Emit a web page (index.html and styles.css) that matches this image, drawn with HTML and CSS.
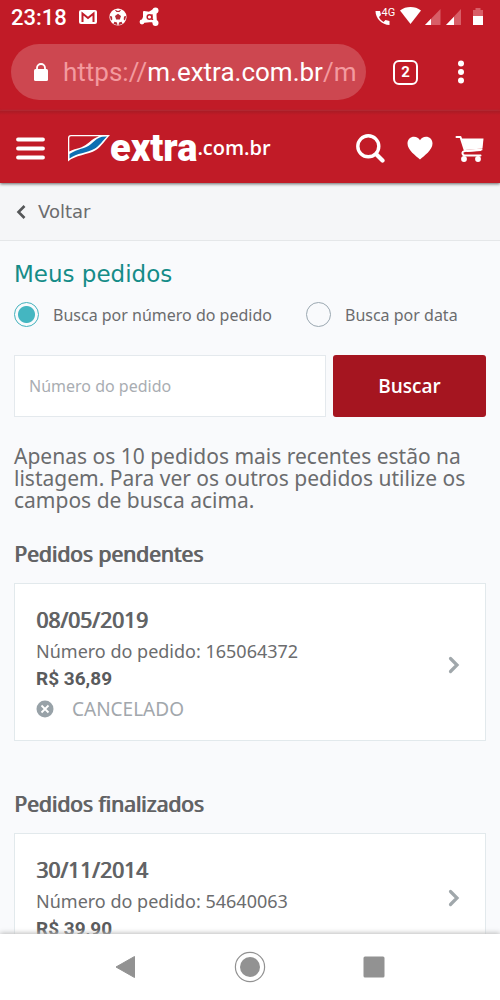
FILE: index.html
```html
<!DOCTYPE html>
<html lang="pt-BR">
<head>
<meta charset="utf-8">
<meta name="viewport" content="width=device-width, initial-scale=1">
<title>Meus pedidos</title>
<link rel="stylesheet" href="styles.css">
</head>
<body>
<div class="screen">
  <div class="browser">
    <div class="status">
      <span class="clock">23:18</span>
      <svg width="18" height="14" viewBox="0 0 18 14"><rect width="18" height="14" rx="2" fill="#fff"/><path d="M3.500 12V3.500L9 8l5.500-4.500V12" fill="none" stroke="#c11b27" stroke-width="2"/></svg>
      <svg width="18" height="18" viewBox="0 0 18 18"><circle cx="9" cy="9" r="8.600" fill="#fff"/><g fill="#b52a35"><path d="M9 5.800l3 2.200-1.200 3.400H7.200L6 8z"/><path d="M5.500 1.600L9 3l3.500-1.400L10.500 4h-3zM.8 8l2.200.6.300 2.800-1.300 1zM17.200 8l-2.200.6-.3 2.800 1.300 1zM4.500 16l.9-2.300 2.600.9.400 2.400zM13.500 16l-.9-2.300-2.600.9-.4 2.400z"/></g></svg>
      <svg width="20" height="20" viewBox="0 0 20 20"><path d="M5 5l5 .8L14.500 3 17 3l-.5 5 .3 5 .2 4-4-3-5 .5L3 15l2-5z" fill="#fff" stroke="#fff" stroke-width="2" stroke-linejoin="round"/><circle cx="16.500" cy="3.500" r="3" fill="#fff"/><circle cx="16.500" cy="16" r="3" fill="#fff"/><circle cx="3" cy="15" r="2.400" fill="#fff"/><circle cx="10.500" cy="10" r="2.300" fill="none" stroke="#c11b27" stroke-width="1.500"/><path d="M13 7.300v5h1.200" fill="none" stroke="#c11b27" stroke-width="1.300"/></svg>
      <svg class="signals" width="109" height="20" viewBox="0 0 109 20"><path d="M.5 4c0 7.500 6.500 13.800 14 14v-4l-4-1-2 2C6 13.500 5 12 4 10l2-2-1-4z" fill="#fff"/><text x="6.500" y="9" class="net">4G</text><path d="M25 3.500c6-4.600 15-4.600 21 0L35.500 17z" fill="#fff"/><path d="M50 18L65.500 2v16z" fill="#d85e67"/><path d="M50 18l6-6.200V18z" fill="#fff"/><path d="M71 18L86 2v16z" fill="#d85e67"/><path d="M71 18l8-8.300V18z" fill="#fff"/><path d="M98 3h2.500V1h5v2h2.500v7H98z" fill="#d85e67"/><path d="M98 9h10v9H98z" fill="#fff"/></svg>
    </div>
    <div class="toolbar">
      <div class="address">
        <svg width="14" height="19" viewBox="0 0 14 19"><rect y="6" width="14" height="12" rx="1.500" fill="#fff"/><path d="M3 7V5a4 4 0 0 1 8 0v2" fill="none" stroke="#fff" stroke-width="1.800"/></svg>
        <span class="url">https://<b>m.extra.com.br</b>/m</span>
      </div>
      <button class="tabs" aria-label="Abas abertas">2</button>
      <button class="plain" aria-label="Menu do navegador"><svg width="8" height="24" viewBox="0 0 8 24" fill="#fff"><circle cx="4" cy="3.500" r="3"/><circle cx="4" cy="12" r="3"/><circle cx="4" cy="20.500" r="3"/></svg></button>
    </div>
  </div>

  <header class="site">
    <button class="plain" aria-label="Menu"><svg width="29" height="23" viewBox="0 0 29 23"><path d="M2 2.500h25M2 11.500h25M2 20.500h25" stroke="#fff" stroke-width="3.800" stroke-linecap="round"/></svg></button>
    <a class="logo" href="#" aria-label="extra.com.br">
      <svg width="43" height="28" viewBox="0 0 43 28"><path d="M1 27.500V4Q1 1 4 1H43C38 6 35 12 29 16 21 21 8 21 1 27.500z" fill="#fff"/><path d="M2.300 17.500V4Q2.300 2.300 4 2.300H32C24 5 21 11 14 13.500 9 15 6 15.500 2.300 17.500z" fill="#c11b27"/><path d="M2.500 20C11 14.500 18 15 24 10 28 6.500 31 3.500 35 2.800L40 2.500C36 6 33 11.500 28 14.500 20 19 10 19 2.500 24.500z" fill="#0d6fb2"/></svg>
      <span class="brand">extra</span><span class="domain">.com.br</span>
    </a>
    <button class="plain" aria-label="Pesquisar"><svg width="29" height="29" viewBox="0 0 29 29" fill="none" stroke="#fff" stroke-linecap="round"><circle cx="12.300" cy="12.300" r="10.500" stroke-width="3.400"/><path d="M20.500 20.500l6 6" stroke-width="4.200"/></svg></button>
    <button class="plain" aria-label="Favoritos"><svg width="26" height="24" viewBox="0 0 26 24"><path d="M13 23.500C9 20 .5 14 .5 7.500.5 3.500 3.500.8 7 .8c2.700 0 4.800 1.200 6 3.400C14.200 2 16.300.8 19 .8c3.500 0 6.500 2.700 6.500 6.700C25.500 14 17 20 13 23.500z" fill="#fff"/></svg></button>
    <button class="plain" aria-label="Carrinho"><svg width="29" height="27" viewBox="0 0 29 27"><path d="M6.500 3.500H28.500L27.500 13.500 10 15z" fill="#fff"/><path d="M1.500 2H5.500L9.500 14.500M26.500 14.500L10 16Q7 16.500 7.500 18.500 8 20.500 10 20.500H25.500" fill="none" stroke="#fff" stroke-width="2" stroke-linecap="round" stroke-linejoin="round"/><path d="M11 15L26 14.200V16L12 17z" fill="#fff"/><circle cx="9" cy="24" r="2.900" fill="#fff"/><circle cx="23" cy="24" r="2.900" fill="#fff"/></svg></button>
  </header>

  <nav class="crumb">
    <a href="#"><svg width="10" height="16" viewBox="0 0 10 16"><path d="M8.500 2L2.500 8l6 6" fill="none" stroke="#555759" stroke-width="2.600"/></svg>Voltar</a>
  </nav>

  <main class="content">
    <h1>Meus pedidos</h1>
    <form class="search">
      <div class="options">
        <label><input type="radio" name="busca" checked>Busca por número do pedido</label>
        <label><input type="radio" name="busca">Busca por data</label>
      </div>
      <div class="fields">
        <input class="number" type="text" placeholder="Número do pedido" aria-label="Número do pedido">
        <button class="submit" type="button">Buscar</button>
      </div>
    </form>
    <p class="note">Apenas os 10 pedidos mais recentes estão na listagem. Para ver os outros pedidos utilize os campos de busca acima.</p>

    <section>
      <h2>Pedidos pendentes</h2>
      <a class="order" href="#">
        <div>
          <h3>08/05/2019</h3>
          <p class="code">Número do pedido: 165064372</p>
          <p class="price">R$ 36,89</p>
          <p class="state"><svg width="18" height="18" viewBox="0 0 18 18"><circle cx="9" cy="9" r="8.500" fill="#98a2a8"/><path d="M5.500 5.500l7 7M12.500 5.500l-7 7" stroke="#fff" stroke-width="1.800"/></svg>CANCELADO</p>
        </div>
        <svg width="12" height="18" viewBox="0 0 12 18"><path d="M2.500 2.500L9 9l-6.500 6.500" fill="none" stroke="#a0a7ab" stroke-width="3.200" stroke-linecap="round"/></svg>
      </a>
    </section>
    <section>
      <h2>Pedidos finalizados</h2>
      <a class="order" href="#">
        <div>
          <h3>30/11/2014</h3>
          <p class="code">Número do pedido: 54640063</p>
          <p class="price">R$ 39,90</p>
        </div>
        <svg width="12" height="18" viewBox="0 0 12 18"><path d="M2.500 2.500L9 9l-6.500 6.500" fill="none" stroke="#a0a7ab" stroke-width="3.200" stroke-linecap="round"/></svg>
      </a>
    </section>
  </main>

  <div class="system">
    <button class="plain" aria-label="Voltar"><svg width="32" height="32" viewBox="0 0 32 32"><path d="M6 16L24.500 5.500v21z" fill="#929292" stroke="#929292" stroke-linejoin="round"/></svg></button>
    <button class="plain" aria-label="Início"><svg width="32" height="32" viewBox="0 0 32 32"><circle cx="16" cy="16" r="14.600" fill="none" stroke="#929292" stroke-width="1.200"/><circle cx="16" cy="16" r="10" fill="#929292"/></svg></button>
    <button class="plain" aria-label="Recentes"><svg width="32" height="32" viewBox="0 0 32 32"><rect x="5.500" y="5.500" width="21" height="21" rx="1.500" fill="#929292"/></svg></button>
  </div>
</div>
</body>
</html>
```
FILE: styles.css
```css
* { box-sizing: border-box; }
body { margin: 0; font-family: "Noto Sans", sans-serif; color: #6b6c6e; background: #f9fafc; }
h1, h2, h3, p { margin: 0; }
a { color: inherit; text-decoration: none; }
svg { display: block; flex: none; }
.screen { display: flex; flex-direction: column; height: 100vh; overflow: hidden; }
.browser, .site, .crumb, .system { flex: none; }
.plain { display: block; padding: 0; border: 0; background: none; }

.browser { background: #c11b27; color: #fff; font-family: Roboto, sans-serif; padding-bottom: 11px; }
.status { display: flex; align-items: center; gap: 12px; height: 34px; padding: 0 16px 0 11px; }
.clock { font-size: 22px; font-weight: 500; }
.signals { margin-left: auto; }
.net { font: 11px Roboto, sans-serif; fill: #fff; }
.toolbar { display: flex; align-items: center; padding: 10px 35px 0 11px; }
.address { flex: 1; display: flex; align-items: center; gap: 15px; min-width: 0; height: 56px; margin-right: 27px; padding: 0 12px 0 23px; border-radius: 28px; background: #cd4750; }
.url { font-size: 26px; color: #f39a9f; white-space: nowrap; }
.url b { font-weight: 400; color: #fff; }
.tabs { width: 25px; height: 25px; margin-right: 39px; padding: 0; border: 2px solid #fff; border-radius: 6px; background: none; color: #fff; font: 700 15px Roboto, sans-serif; }

.site { position: relative; display: flex; align-items: center; gap: 22px; height: 72px; padding: 2px 16px 0; background: linear-gradient(#aa1b25, #c11b27 4px); box-shadow: 0 1px 3px #666; }
.logo { flex: 1; display: flex; align-items: center; color: #fff; white-space: nowrap; }
.brand { font: 900 38px/44px Roboto, sans-serif; }
.domain { font: 600 20px/28px "Open Sans", sans-serif; }

.crumb { padding: 15px 16px 14px; background: #f5f6f8; border-bottom: 1px solid #e5e7e9; font: 18px/28px "DejaVu Sans", sans-serif; }
.crumb a { display: flex; align-items: center; gap: 12px; }

.content { flex: 1; min-height: 0; overflow: hidden; padding: 19px 14px 0; }
h1 { font: 500 23px/28px "DejaVu Sans", sans-serif; color: #158c88; }
.options { display: flex; gap: 34px; margin-top: 14px; }
.options label { display: flex; align-items: center; gap: 14px; font-size: 16px; line-height: 24px; white-space: nowrap; }
.options input { appearance: none; width: 25px; height: 25px; margin: 0; border: 1px solid #9ba8b1; border-radius: 50%; }
.options input:checked { border-color: #44b2bd; background: radial-gradient(circle, #44b6c1 8px, #f9fafc 9px); }
.fields { display: flex; gap: 7px; margin-top: 28px; }
.number { flex: 1; min-width: 0; height: 62px; padding: 0 14px; border: 1px solid #e4e9ed; background: #fff; font: 16px "Noto Sans", sans-serif; }
.number::placeholder { color: #a9adb2; opacity: 1; }
.submit { width: 153px; border: 0; border-radius: 3px; background: #a51520; color: #fff; font: 600 19px "Open Sans", sans-serif; }
.note { margin: 28px 0; font-size: 21px; line-height: 22px; }
h2, h3 { font-size: 21px; font-weight: 400; line-height: 30px; color: #626365; text-shadow: 1px 0 #626365; }
section { margin-bottom: 48px; }
.order { display: flex; align-items: center; justify-content: space-between; margin-top: 14px; padding: 21px 25px 15px 21px; border: 1px solid #e2e9ec; background: #fff; }
.code { font-size: 18px; line-height: 32px; }
.price { font: 700 19px/24px Roboto, sans-serif; color: #5a5b5d; }
.state { display: flex; align-items: center; gap: 18px; margin-top: 2px; font-size: 19px; line-height: 32px; color: #a2a7ac; }

.system { position: relative; display: flex; justify-content: center; align-items: center; gap: 92px; height: 66px; background: #fff; box-shadow: 0 -1px 5px #bbb; }
```
